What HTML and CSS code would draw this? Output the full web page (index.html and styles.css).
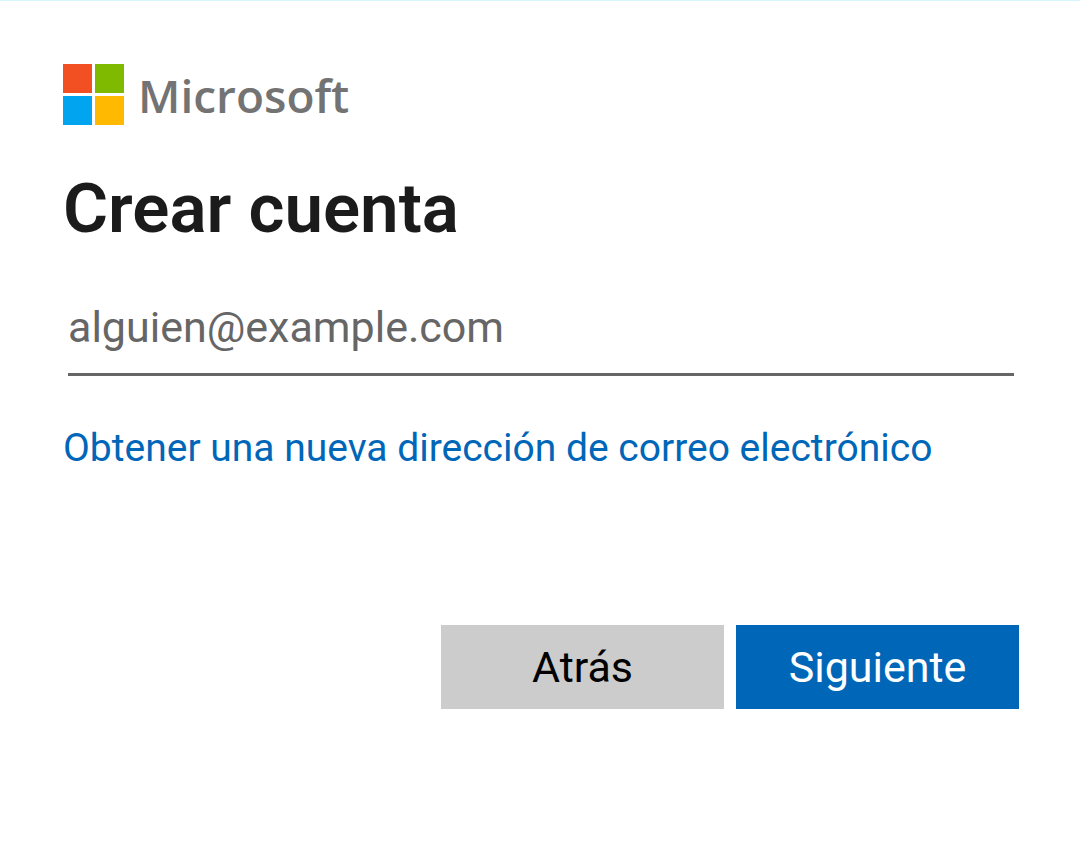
FILE: index.html
```html
<!DOCTYPE html>
<html lang="es">
<head>
    <meta charset="UTF-8">
    <meta name="viewport" content="width=device-width, initial-scale=1.0">
    <title>Crear cuenta</title>
    <link rel="stylesheet" href="styles.css">
</head>
<body>
    <main class="signup">
        <div class="brand">
            <svg class="brand-logo" viewBox="0 0 61 61" aria-hidden="true">
                <rect width="29" height="29" fill="#f25022"/>
                <rect x="32" width="29" height="29" fill="#7fba00"/>
                <rect y="32" width="29" height="29" fill="#00a4ef"/>
                <rect x="32" y="32" width="29" height="29" fill="#ffb900"/>
            </svg>
            <span class="brand-name">Microsoft</span>
        </div>

        <h1>Crear cuenta</h1>

        <form>
            <input class="email" type="email" name="email" placeholder="alguien@example.com" aria-label="Correo electrónico">
            <a class="new-address" href="#">Obtener una nueva dirección de correo electrónico</a>
            <div class="buttons">
                <button class="btn" type="button">Atrás</button>
                <button class="btn btn-primary" type="submit">Siguiente</button>
            </div>
        </form>
    </main>
</body>
</html>
```
FILE: styles.css
```css
* {
    box-sizing: border-box;
}

body {
    margin: 0;
    font-family: Roboto, Arial, sans-serif;
    color: #1b1b1b;
    background-color: #fff;
    border-top: 1px solid #d5f7fa;
}

.signup {
    padding: 63px 61px 64px 63px;
}

.brand {
    display: flex;
    align-items: center;
    gap: 14px;
    height: 61px;
}

.brand-logo {
    width: 61px;
    height: 61px;
}

.brand-name {
    font-family: "Open Sans", "Segoe UI", sans-serif;
    font-size: 46px;
    font-weight: 600;
    color: #737373;
}

h1 {
    margin: 44px 0 0;
    font-size: 69px;
    line-height: 80px;
    font-weight: 600;
}

.email {
    display: block;
    width: calc(100% - 10px);
    height: 96px;
    margin: 31px 5px 0;
    padding: 0;
    border: none;
    border-bottom: 3px solid #666;
    border-radius: 0;
    outline: none;
    background: none;
    font-family: inherit;
    font-size: 43px;
}

.email::placeholder {
    color: #666;
    opacity: 1;
}

.new-address {
    display: block;
    margin-top: 48px;
    font-size: 39px;
    line-height: 48px;
    color: #0067b8;
    text-decoration: none;
}

.buttons {
    display: flex;
    justify-content: flex-end;
    gap: 12px;
    margin-top: 153px;
}

.btn {
    width: 283px;
    height: 84px;
    padding: 0;
    border: none;
    font-family: inherit;
    font-size: 43px;
    color: #000;
    background-color: #ccc;
    cursor: pointer;
}

.btn-primary {
    color: #fff;
    background-color: #0067b8;
}
```
